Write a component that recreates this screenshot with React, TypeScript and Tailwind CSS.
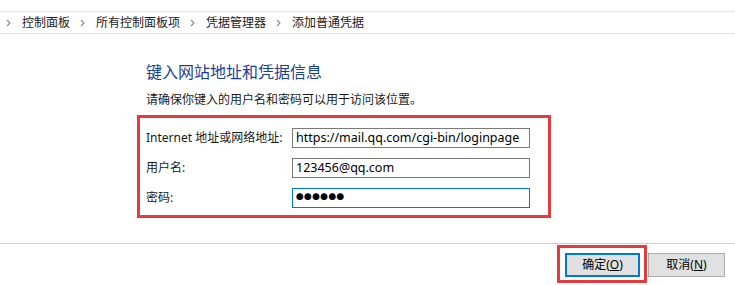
const FONT = 'font-["Noto_Sans","Noto_Sans_CJK_SC",sans-serif]';

const CRUMBS = ['控制面板', '所有控制面板项', '凭据管理器', '添加普通凭据'];

function Chevron() {
  return (
    <svg width="5" height="8" viewBox="0 0 5 8" className="flex-shrink-0">
      <path d="M1 1 L4 4 L1 7" fill="none" stroke="#8a8a8a" strokeWidth="1.1" />
    </svg>
  );
}

function Field({ label, value, focused, password }: {
  label: string; value: string; focused?: boolean; password?: boolean;
}) {
  return (
    <>
      <label className="text-[12px] leading-[20px] text-[#1a1a1a] whitespace-nowrap">{label}</label>
      <div
        className={`h-[20px] px-[3px] flex items-center bg-white border overflow-hidden ${focused ? 'border-[#0078d7]' : 'border-[#7a7a7a]'}`}
      >
        {password ? (
          <span className="text-[7.5px] tracking-[0.6px] text-black leading-none">{value}</span>
        ) : (
          <span className="text-[12.5px] text-black leading-none whitespace-nowrap">{value}</span>
        )}
      </div>
    </>
  );
}

export default function App() {
  return (
    <div className={`w-[735px] h-[285px] bg-white overflow-hidden ${FONT}`}>
      {/* Breadcrumb */}
      <div className="mt-[11px] h-[23px] border-y border-[#e3e3e3] flex items-center pl-[6px]">
        {CRUMBS.map(c => (
          <div key={c} className="flex items-center">
            <Chevron />
            <span className="ml-[11px] mr-[10px] text-[12px] text-[#1a1a1a]">{c}</span>
          </div>
        ))}
      </div>

      <div className="pl-[137px] mt-[27px]">
        <h1 className="ml-[9px] text-[16px] leading-[22px] text-[#1c3f94]">键入网站地址和凭据信息</h1>
        <p className="ml-[9px] mt-[9px] text-[12px] leading-[16px] text-[#1a1a1a]">
          请确保你键入的用户名和密码可以用于访问该位置。
        </p>

        <div className="mt-[7px] w-[414px] border-[3px] border-[#e53b3f] pl-[6px] pr-[18px] pt-[10px] pb-[7px]">
          <div className="grid grid-cols-[146px_238px] gap-y-[10px] items-center">
            <Field label="Internet 地址或网络地址:" value="https://mail.qq.com/cgi-bin/loginpage" />
            <Field label="用户名:" value="123456@qq.com" />
            <Field label="密码:" value="●●●●●●" focused password />
          </div>
        </div>
      </div>

      {/* Footer */}
      <div className="mt-[25px] border-t border-[#cfcfcf] flex justify-end items-start pt-[1px] pr-[10px]">
        <div className="border-[3px] border-[#e53b3f] pt-[5px] pl-[5px] pr-[4px] pb-[3px]">
          <button className="w-[75px] h-[24px] bg-[#e1e1e1] border-2 border-[#0078d7] text-[12px] text-black flex items-center justify-center">
            确定(<span className="underline">O</span>)
          </button>
        </div>
        <button className="ml-[1px] mt-[8px] w-[77px] h-[24px] bg-[#e1e1e1] border border-[#adadad] text-[12px] text-black flex items-center justify-center">
          取消(<span className="underline">N</span>)
        </button>
      </div>
    </div>
  );
}
